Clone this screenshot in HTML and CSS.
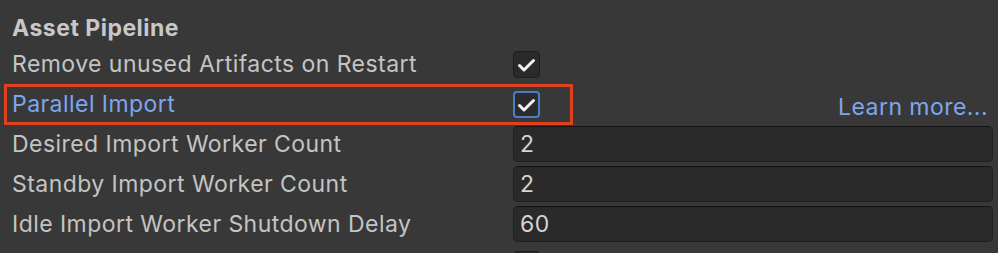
FILE: index.html
```html
<!DOCTYPE html>
<html>
<head>
<meta charset="utf-8">
<link rel="stylesheet" href="styles.css">
</head>
<body>
<div class="panel">
  <div class="title">Asset Pipeline</div>
  <div class="row">
    <div class="label">Remove unused Artifacts on Restart</div>
    <div class="check"><svg viewBox="0 0 27 27" width="27" height="27"><polyline points="6.5,14.5 11,19 20.5,9.5" fill="none" stroke="#f2f2f2" stroke-width="3" stroke-linecap="round" stroke-linejoin="round"/></svg></div>
  </div>
  <div class="row highlighted">
    <div class="label link">Parallel Import</div>
    <div class="check focused"><svg viewBox="0 0 27 27" width="27" height="27"><polyline points="6.5,14.5 11,19 20.5,9.5" fill="none" stroke="#f2f2f2" stroke-width="3" stroke-linecap="round" stroke-linejoin="round"/></svg></div>
    <div class="learn">Learn more...</div>
    <div class="marker"></div>
  </div>
  <div class="row">
    <div class="label">Desired Import Worker Count</div>
    <div class="field">2</div>
  </div>
  <div class="row">
    <div class="label">Standby Import Worker Count</div>
    <div class="field">2</div>
  </div>
  <div class="row">
    <div class="label">Idle Import Worker Shutdown Delay</div>
    <div class="field">60</div>
  </div>
  <div class="row">
    <div class="label">&nbsp;</div>
    <div class="check empty"></div>
  </div>
</div>
</body>
</html>
```
FILE: styles.css
```css
html, body {
  margin: 0;
  padding: 0;
  background: #383838;
  overflow: hidden;
}
.panel {
  font-family: "Inter", "Noto Sans", sans-serif;
  font-size: 23px;
  letter-spacing: 0.45px;
  color: #c4c4c4;
  padding-left: 12px;
  padding-right: 5px;
  height: 253px;
  overflow: hidden;
}
.title {
  height: 44px;
  line-height: 56px;
  font-size: 23px;
  letter-spacing: 0.5px;
  font-weight: 700;
  color: #c8c8c8;
  box-sizing: border-box;
}
.row {
  position: relative;
  height: 40px;
  display: flex;
  align-items: center;
}
.label {
  width: 501px;
  flex: none;
  white-space: nowrap;
}
.label.link {
  color: #7ea6ec;
}
.check {
  width: 27px;
  height: 27px;
  box-sizing: border-box;
  border: 1px solid #1e1e1e;
  border-radius: 4px;
  background: #2a2a2a;
  display: flex;
  align-items: center;
  justify-content: center;
  flex: none;
  position: relative;
}
.check svg {
  display: block;
  position: absolute;
  left: -1px;
  top: -1px;
}
.check.focused {
  border: 2px solid #4a7ec4;
  background: #2b2b2b;
}
.check.focused svg {
  left: -2px;
  top: -2px;
}
.learn {
  margin-left: auto;
  margin-right: 5px;
  padding-top: 6px;
  color: #7ea6ec;
}
.marker {
  position: absolute;
  left: -8px;
  top: 0;
  width: 569px;
  height: 41px;
  border: 3px solid #e0401f;
  box-sizing: border-box;
  pointer-events: none;
}
.field {
  flex: 1;
  height: 36px;
  box-sizing: border-box;
  background: #2a2a2a;
  border: 1px solid #202020;
  border-top-color: #131313;
  border-radius: 5px;
  padding-left: 6px;
  display: flex;
  align-items: center;
  color: #d4d4d4;
}
```
